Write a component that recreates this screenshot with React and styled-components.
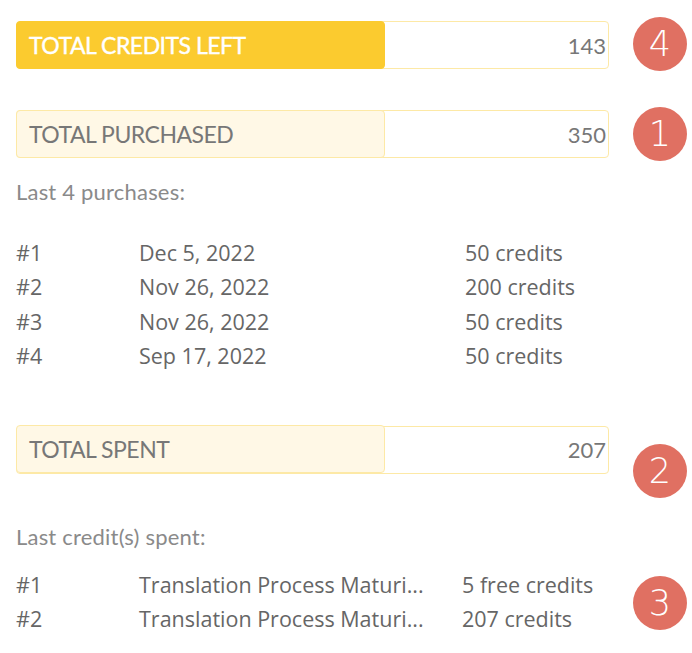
import React from "react";
import styled, { createGlobalStyle } from "styled-components";

const GlobalStyle = createGlobalStyle`
  html, body {
    margin: 0;
    padding: 0;
    background: #fff;
  }
`;

const purchases = [
  { date: "Dec 5, 2022", amount: "50 credits" },
  { date: "Nov 26, 2022", amount: "200 credits" },
  { date: "Nov 26, 2022", amount: "50 credits" },
  { date: "Sep 17, 2022", amount: "50 credits" },
];

const spent = [
  { name: "Translation Process Maturi...", amount: "5 free credits" },
  { name: "Translation Process Maturi...", amount: "207 credits" },
];

const markers = [
  { n: 4, y: 44 },
  { n: 1, y: 134 },
  { n: 2, y: 471 },
  { n: 3, y: 603 },
];

function App() {
  return (
    <Page>
      <GlobalStyle />
      <TotalBar>
        <TotalLabel $strong>TOTAL CREDITS LEFT</TotalLabel>
        <TotalValue>143</TotalValue>
      </TotalBar>

      <TotalBar $gap="41px">
        <TotalLabel>TOTAL PURCHASED</TotalLabel>
        <TotalValue>350</TotalValue>
      </TotalBar>
      <Caption $gap="22px">Last 4 purchases:</Caption>
      <HistoryList $gap="32px" $cols="123px 326px auto">
        {purchases.map((p, i) => (
          <HistoryRow key={i}>
            <span>#{i + 1}</span>
            <span>{p.date}</span>
            <span>{p.amount}</span>
          </HistoryRow>
        ))}
      </HistoryList>

      <TotalBar $gap="52px">
        <TotalLabel>TOTAL SPENT</TotalLabel>
        <TotalValue>207</TotalValue>
      </TotalBar>
      <Caption $gap="51px">Last credit(s) spent:</Caption>
      <HistoryList $gap="19px" $cols="123px 323px auto">
        {spent.map((s, i) => (
          <HistoryRow key={i}>
            <span>#{i + 1}</span>
            <span>{s.name}</span>
            <span>{s.amount}</span>
          </HistoryRow>
        ))}
      </HistoryList>

      {markers.map((m) => (
        <Marker key={m.n} style={{ top: m.y - 27 }}>
          {m.n}
        </Marker>
      ))}
    </Page>
  );
}

const Page = styled.div`
  position: relative;
  width: 692px;
  height: 653px;
  box-sizing: border-box;
  padding: 21px 0 0 16px;
  display: flex;
  flex-direction: column;
  font-family: "Lato", "Liberation Sans", sans-serif;
`;

const TotalBar = styled.div`
  position: relative;
  width: 593px;
  height: 48px;
  box-sizing: border-box;
  margin-top: ${(p) => p.$gap || "0"};
  border: 1px solid #fde9a6;
  border-radius: 4px;
  display: flex;
  align-items: center;
  justify-content: space-between;
  background: #fff;
`;

const TotalLabel = styled.div`
  width: 369px;
  height: 48px;
  margin: -1px 0 0 -1px;
  box-sizing: border-box;
  padding-left: 12px;
  display: flex;
  align-items: center;
  border-radius: 4px;
  font-size: 23px;
  letter-spacing: -0.5px;
  background: ${(p) => (p.$strong ? "#fbcb2f" : "#fff8e6")};
  border: 1px solid ${(p) => (p.$strong ? "#fbcb2f" : "#fde9a6")};
  color: ${(p) => (p.$strong ? "#fff" : "#777")};
  -webkit-text-stroke: ${(p) => (p.$strong ? "0.4px #fff" : "0")};
`;

const TotalValue = styled.div`
  padding-right: 2px;
  font-size: 22px;
  color: #777;
`;

const Caption = styled.div`
  margin-top: ${(p) => p.$gap};
  font-size: 22px;
  line-height: 24px;
  letter-spacing: 0.2px;
  color: #8a8a8a;
`;

const HistoryList = styled.div`
  margin-top: ${(p) => p.$gap};
  display: grid;
  grid-template-columns: ${(p) => p.$cols};
  font-family: "Open Sans", "Noto Sans", sans-serif;
  font-size: 21.5px;
  color: #666;
`;

const HistoryRow = styled.div`
  display: contents;
  span {
    line-height: 34.4px;
    white-space: nowrap;
  }
`;

const Marker = styled.div`
  position: absolute;
  left: 633px;
  width: 54px;
  height: 54px;
  border-radius: 50%;
  background: #e07062;
  color: #fff;
  display: flex;
  align-items: center;
  justify-content: center;
  font-family: "DejaVu Sans", "Open Sans", sans-serif;
  font-weight: 200;
  font-size: 35px;
  line-height: 1;
`;

export default App;
